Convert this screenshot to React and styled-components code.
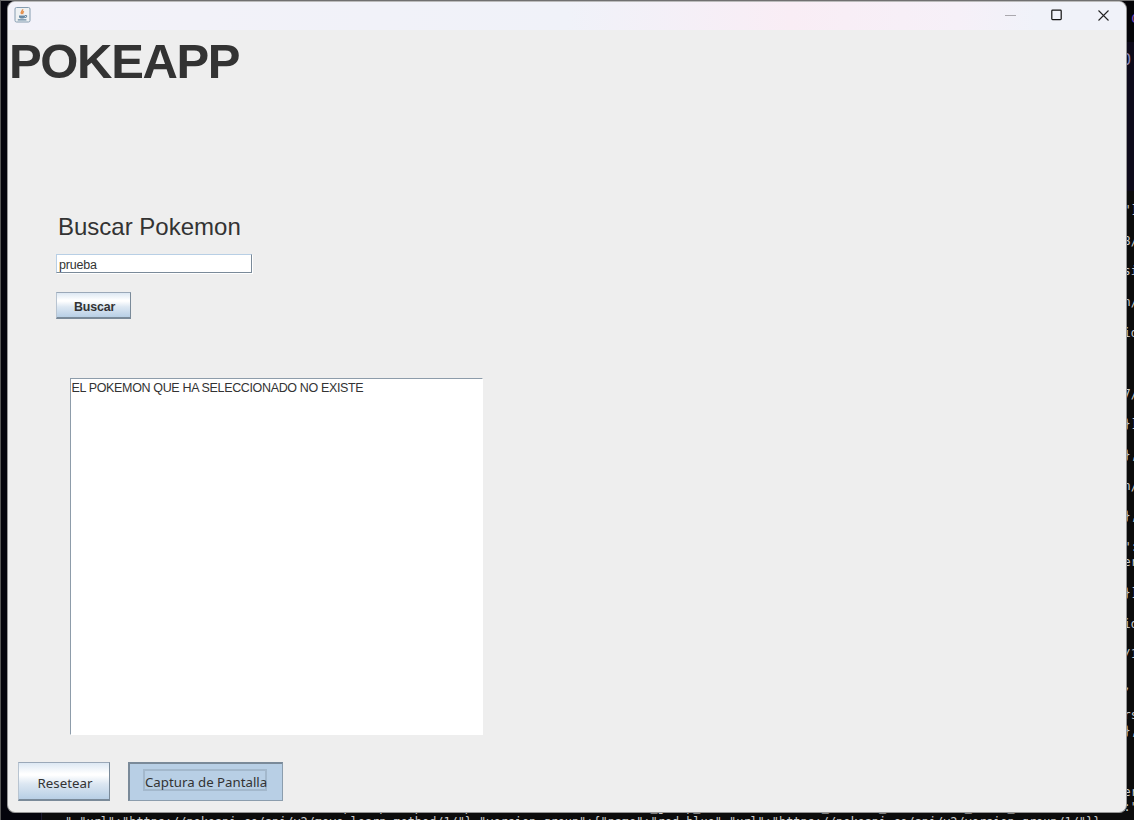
import React from "react";
import styled, { createGlobalStyle, css } from "styled-components";

const Global = createGlobalStyle`
  * { box-sizing: border-box; }
  html, body { margin: 0; height: 100%; overflow: hidden; background: #0c0c0c; }
`;

const Desktop = styled.div`
  position: relative;
  width: 1134px;
  height: 820px;
  overflow: hidden;
  background: #0c0c0c;
  border-top: 1px solid #707070;
  border-left: 1px solid #555;
`;

const Editor = styled.div`
  position: absolute;
  inset: 0 auto 0 0;
  width: 41px;
  background: #04040c;
  border-right: 1px solid #1d1a30;
`;

const EditorCorner = styled.div`
  position: absolute;
  top: 0;
  right: 0;
  width: 14px;
  height: 190px;
  background: linear-gradient(#040408 41px, #0d0a1a 41px);
`;

const Terminal = styled.pre`
  position: absolute;
  left: ${(p) => p.$x}px;
  top: ${(p) => p.$y}px;
  margin: 0;
  color: #ccc;
  font: 11.87px/15.32px "DejaVu Sans Mono", monospace;
`;

const Glyph = styled(Terminal)`
  color: ${(p) => p.$color};
  font-size: 15px;
`;

const Window = styled.section`
  position: absolute;
  left: 6px;
  top: 0;
  width: 1120px;
  height: 812px;
  border: 1px solid #969696;
  border-top-color: #bbb;
  border-radius: 8px;
  overflow: hidden;
  background: #eee;
  display: flex;
  flex-direction: column;
  color: #333;
  font-family: "Liberation Sans", Arial, sans-serif;
`;

const TitleBar = styled.header`
  flex: none;
  height: 28px;
  display: flex;
  align-items: center;
  justify-content: space-between;
  padding: 0 17px 2px 6px;
  background: linear-gradient(90deg, #f3f2f9 0, #f0f2f9 50%, #f9edf5 70%, #f6f0f8 85%, #f0f2f9 92%);
`;

const Controls = styled.div`
  display: flex;
  align-items: center;
  gap: 35px;
  svg { display: block; }
`;

const Content = styled.main`
  flex: 1;
  display: flex;
  flex-direction: column;
  align-items: flex-start;
`;

const Title = styled.h1`
  margin: 3px 0 0 1px;
  height: 56px;
  font-size: 49px;
  line-height: 56px;
  font-weight: 700;
  letter-spacing: -1.35px;
`;

const Search = styled.form`
  margin: 122px 0 0 48px;
  display: flex;
  flex-direction: column;
  align-items: flex-start;
`;

const Label = styled.label`
  margin-left: 2px;
  font-size: 24px;
  line-height: 31px;
`;

const Field = styled.input`
  display: block;
  width: 196px;
  height: 19px;
  margin-top: 12px;
  padding: 3px 0 0 2px;
  border: 1px solid;
  border-color: #b8cfe5 #7a8a99 #7a8a99 #b8cfe5;
  box-shadow: 1px 1px #fff;
  background: #fff;
  color: #333;
  font: 12.5px "Liberation Sans", Arial, sans-serif;
  letter-spacing: -0.2px;
  outline: 0;
`;

const metal = css`
  background: linear-gradient(#dde8f3 0, #fff 30%, #fff 34%, #dce7f2 58%, #b8cfe5 100%);
`;

const Button = styled.button`
  ${metal}
  width: ${(p) => p.$w}px;
  height: ${(p) => p.$h}px;
  padding: 3px 0 0 2px;
  border: solid;
  border-width: 1px 1px 2px 1px;
  border-color: #9aa8b8 #7a8a99 #7a8a99 #b8c4d1;
  color: #333;
  font: ${(p) => p.$font};
  white-space: nowrap;
`;

const SearchButton = styled(Button)`
  margin-top: 19px;
  letter-spacing: -0.15px;
`;

const Result = styled.div`
  width: 413px;
  height: 357px;
  margin: 59px 0 0 62px;
  border: solid #fff;
  border-width: 1px;
  border-top-color: #8d9caa;
  border-left-color: #8d9caa;
  background: #fff;
  padding: 1px 0 0 0.5px;
  font-size: 12.5px;
  line-height: 17px;
  letter-spacing: -0.35px;
  white-space: nowrap;
`;

const Actions = styled.footer`
  display: flex;
  gap: 18px;
  margin: 27px 0 0 10px;
`;

const PressedButton = styled(Button)`
  background: #b8cfe5;
  border-width: 2px 1px 1px 2px;
  border-color: #7a8a99 #8b9dad #8b9dad #7a8a99;
  padding: 0;
`;

const Focus = styled.span`
  display: block;
  width: 124px;
  height: 22px;
  margin: -4px auto 0 13px;
  border: 2px solid #a3b8cc;
  line-height: 23px;
`;

const rows = {
  13: `"]`, 15: "8/", 17: "si", 19: "n/", 21: "id", 25: "7/", 27: "}]", 29: "},", 31: "n/", 33: "},",
  35: `":`, 36: "er", 38: "}]", 40: "id", 42: "/1", 44: ",", 46: "rs", 47: "},", 51: "er", 52: `:"`,
};
const edge = Array.from({ length: 53 }, (_, i) => rows[i] || "").join("\n");

const JavaIcon = () => (
  <svg width="17" height="17" viewBox="0 0 17 17" fill="none">
    <rect x="1" y=".5" width="15" height="14.5" rx="1.5" fill="#eef1f3" stroke="#859cb0" />
    <path d="M8.6 2.3c.5 1.8-2.8 2.6-1 4.8M10 4.3C8.1 5.3 9 6 8.5 7.1" stroke="#e4924f" strokeWidth="1.5" />
    <path d="M5 8.5h6v1.2c0 1-1 1.7-2 1.7H7c-1 0-2-.7-2-1.7z" fill="#6889a3" />
    <path d="M11 8.5c2.8-.5 1.7 2-.4 2.1M3.8 12.9h8.6" stroke="#6889a3" strokeWidth="1.1" />
  </svg>
);

export default function App() {
  return (
    <>
      <Global />
      <Desktop>
        <Editor />
        <EditorCorner />
        <Terminal $x={1122.6} $y={3}>{edge}</Terminal>
        <Glyph $x={1130} $y={10} $color="#7b4bb5">o</Glyph>
        <Glyph $x={1121} $y={52} $color="#8f87b5">O</Glyph>
        <Terminal $x={64} $y={799}>
          {'[{"move":{"name":"transform","url":"https://pokeapi.co/api/v2/move/144/"},"version_group_details":[{"level_learned_at":1,"move_learn_method":{\n","url":"https://pokeapi.co/api/v2/move-learn-method/1/"},"version_group":{"name":"red-blue","url":"https://pokeapi.co/api/v2/version-group/1/"}}'}
        </Terminal>
        <Window>
          <TitleBar>
            <JavaIcon />
            <Controls>
              <svg width="11" height="11"><path d="M0 5.5h11" stroke="#aaa8ae" /></svg>
              <svg width="12" height="12"><rect x=".8" y="1.2" width="9.4" height="9.4" rx=".8" fill="none" stroke="#111" strokeWidth="1.2" /></svg>
              <svg width="11" height="11"><path d="M.5.5l10 10M10.5.5l-10 10" stroke="#222" strokeWidth="1.1" /></svg>
            </Controls>
          </TitleBar>
          <Content>
            <Title>POKEAPP</Title>
            <Search onSubmit={(e) => e.preventDefault()}>
              <Label>Buscar Pokemon</Label>
              <Field defaultValue="prueba" />
              <SearchButton $w={75} $h={27} $font='700 12.4px "Liberation Sans", Arial, sans-serif'>Buscar</SearchButton>
            </Search>
            <Result>EL POKEMON QUE HA SELECCIONADO NO EXISTE</Result>
            <Actions>
              <Button $w={92} $h={39} $font='13.3px "Noto Sans", sans-serif'>Resetear</Button>
              <PressedButton $w={155} $h={39} $font='13.25px "Noto Sans", sans-serif'>
                <Focus>Captura de Pantalla</Focus>
              </PressedButton>
            </Actions>
          </Content>
        </Window>
      </Desktop>
    </>
  );
}
